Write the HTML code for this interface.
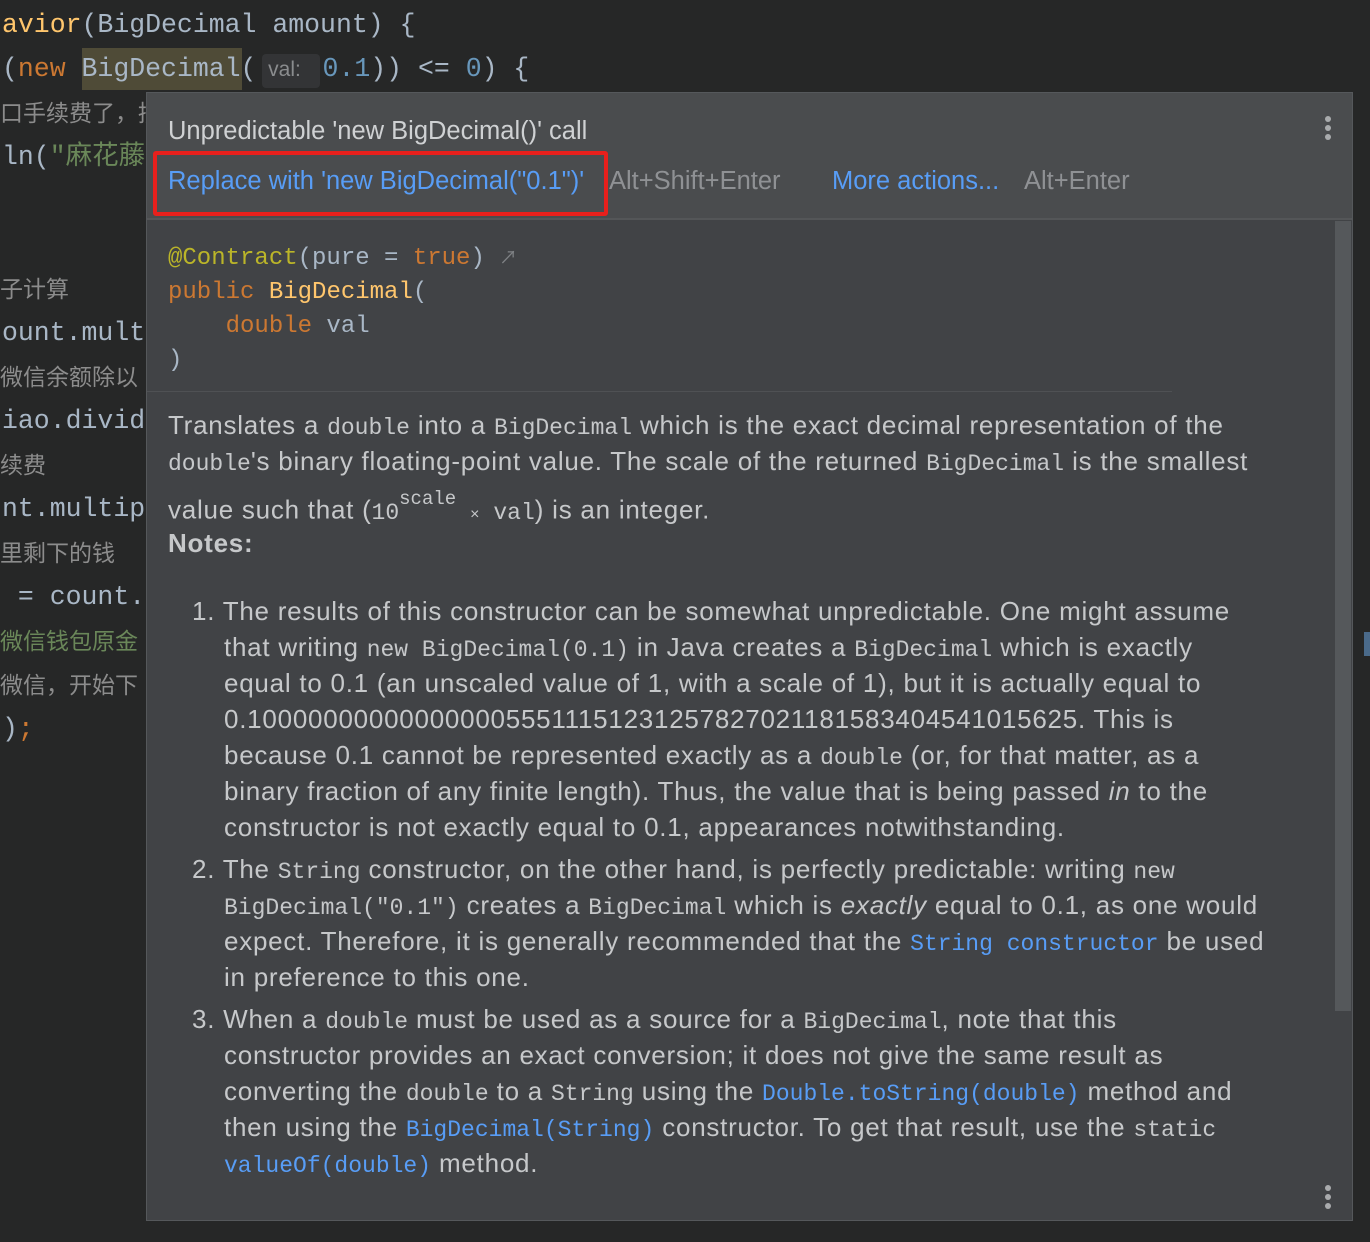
<!DOCTYPE html>
<html><head><meta charset="utf-8"><style>
*{margin:0;padding:0;box-sizing:border-box}
html,body{width:1370px;height:1242px;overflow:hidden;background:#262727}
body{position:relative;font-family:"Liberation Sans","Noto Sans CJK SC",sans-serif;color:#c6c8ca}
.l{position:absolute;white-space:pre;line-height:36px;height:36px}
.m{font-family:"Liberation Mono","Noto Sans CJK SC",monospace}
.ed{font-size:24px;color:#a9b7c6}
.ed2{font-size:26.5px;color:#a9b7c6}
.cn{font-family:"Liberation Sans","Noto Sans CJK SC",sans-serif;font-size:23px;color:#8c8c8c}
.or{color:#cc7832}.yl{color:#ffc66d}.bl{color:#6897bb}.gr{color:#6a8759}
.pop{position:absolute;left:146px;top:92px;width:1207px;height:1129px;background:#414346;border:1px solid #55585b}
.hdr{position:absolute;left:0;top:0;width:100%;height:127px;background:#4a4c4e;border-bottom:2px solid #545658}
.t{font-size:26px;letter-spacing:0.75px}
.h{font-size:25.5px}
.mm{font-family:"Liberation Mono",monospace;font-size:23px;letter-spacing:0}
.lk{color:#589df6}
.dots{position:absolute;width:6px}
.dots i{display:block;width:6px;height:6px;border-radius:50%;background:#a9abad;margin-bottom:3px}
</style></head><body>
<div class="l m ed2" style="left:2px;top:7px"><span class="yl">avior</span>(BigDecimal amount) {</div>
<div style="position:absolute;left:82px;top:48px;width:160px;height:42px;background:#4f4b37"></div>
<div style="position:absolute;left:262px;top:54px;width:58px;height:34px;background:#333436;border-radius:4px"></div>
<div class="l m ed2" style="left:2px;top:51px">(<span class="or">new</span> BigDecimal(<span style="font-family:'Liberation Sans';font-size:21px;color:#8a8c8e">  val: </span><span class="bl"> 0.1</span>)) &lt;= <span class="bl">0</span>) {</div>
<div class="l cn" style="left:0;top:95px">口手续费了，拼</div>
<div class="l m ed2" style="left:2px;top:139px">ln(<span class="gr">"麻花藤</span></div>
<div class="l cn" style="left:0;top:271px">子计算</div>
<div class="l m ed2" style="left:2px;top:315px">ount.mult</div>
<div class="l cn" style="left:0;top:359px">微信余额除以</div>
<div class="l m ed2" style="left:2px;top:403px">iao.divid</div>
<div class="l cn" style="left:0;top:447px">续费</div>
<div class="l m ed2" style="left:2px;top:491px">nt.multip</div>
<div class="l cn" style="left:0;top:535px">里剩下的钱</div>
<div class="l m ed2" style="left:2px;top:579px"> = count.</div>
<div class="l cn" style="left:0;top:623px;color:#6a8759">微信钱包原金</div>
<div class="l cn" style="left:0;top:667px">微信，开始下</div>
<div class="l m ed2" style="left:2px;top:711px">)<span class="or">;</span></div>
<div style="position:absolute;left:1364px;top:632px;width:6px;height:24px;background:#4a6a8a"></div>

<div class="pop">
 <div class="hdr"></div>
 <div class="dots" style="left:1178px;top:23px"><i></i><i></i><i></i></div>
 <div style="position:absolute;left:1188px;top:128px;width:16px;height:790px;background:#55585b"></div>
 <div style="position:absolute;left:0;top:298px;width:1025px;height:1px;background:#4f5154"></div>
 <div class="dots" style="left:1178px;top:1092px"><i></i><i></i><i></i></div>
</div>
<div style="position:absolute;left:153px;top:151px;width:455px;height:65px;border:4px solid #e8201c;border-radius:3px"></div>

<div class="l h" style="left:168px;top:113px;color:#cfd1d3">Unpredictable 'new BigDecimal()' call</div>
<div class="l h" style="left:168px;top:163px;color:#589df6">Replace with 'new BigDecimal("0.1")'</div>
<div class="l h" style="left:609px;top:163px;color:#8f9194">Alt+Shift+Enter</div>
<div class="l h" style="left:832px;top:163px;color:#589df6">More actions...</div>
<div class="l h" style="left:1024px;top:163px;color:#8f9194">Alt+Enter</div>

<div class="l m ed" style="left:168px;top:241px"><span style="color:#bbb529">@Contract</span>(pure = <span class="or">true</span>) <span style="color:#7f8285;font-size:18px">↗</span></div>
<div class="l m ed" style="left:168px;top:275px"><span class="or">public</span> <span class="yl">BigDecimal</span>(</div>
<div class="l m ed" style="left:168px;top:309px">    <span class="or">double</span> val</div>
<div class="l m ed" style="left:168px;top:343px">)</div>

<div class="l t" style="left:168px;top:407px">Translates a <span class="mm">double</span> into a <span class="mm">BigDecimal</span> which is the exact decimal representation of the</div>
<div class="l t" style="left:168px;top:443px"><span class="mm">double</span>'s binary floating-point value. The scale of the returned <span class="mm">BigDecimal</span> is the smallest</div>
<div class="l t" style="left:168px;top:487px">value such that (<span class="mm">10<sup style="font-size:19px;position:relative;top:-6px">scale</sup> <span style="font-size:16px">×</span> val</span>) is an integer.</div>
<div class="l t" style="left:168px;top:525px;font-weight:bold">Notes:</div>

<div class="l t" style="left:192px;top:593px">1. The results of this constructor can be somewhat unpredictable. One might assume</div>
<div class="l t" style="left:224px;top:629px">that writing <span class="mm">new BigDecimal(0.1)</span> in Java creates a <span class="mm">BigDecimal</span> which is exactly</div>
<div class="l t" style="left:224px;top:665px">equal to 0.1 (an unscaled value of 1, with a scale of 1), but it is actually equal to</div>
<div class="l t" style="left:224px;top:701px">0.1000000000000000055511151231257827021181583404541015625. This is</div>
<div class="l t" style="left:224px;top:737px">because 0.1 cannot be represented exactly as a <span class="mm">double</span> (or, for that matter, as a</div>
<div class="l t" style="left:224px;top:773px">binary fraction of any finite length). Thus, the value that is being passed <i>in</i> to the</div>
<div class="l t" style="left:224px;top:809px">constructor is not exactly equal to 0.1, appearances notwithstanding.</div>
<div class="l t" style="left:192px;top:851px">2. The <span class="mm">String</span> constructor, on the other hand, is perfectly predictable: writing <span class="mm">new</span></div>
<div class="l t" style="left:224px;top:887px"><span class="mm">BigDecimal("0.1")</span> creates a <span class="mm">BigDecimal</span> which is <i>exactly</i> equal to 0.1, as one would</div>
<div class="l t" style="left:224px;top:923px">expect. Therefore, it is generally recommended that the <span class="mm lk">String constructor</span> be used</div>
<div class="l t" style="left:224px;top:959px">in preference to this one.</div>
<div class="l t" style="left:192px;top:1001px">3. When a <span class="mm">double</span> must be used as a source for a <span class="mm">BigDecimal</span>, note that this</div>
<div class="l t" style="left:224px;top:1037px">constructor provides an exact conversion; it does not give the same result as</div>
<div class="l t" style="left:224px;top:1073px">converting the <span class="mm">double</span> to a <span class="mm">String</span> using the <span class="mm lk">Double.toString(double)</span> method and</div>
<div class="l t" style="left:224px;top:1109px">then using the <span class="mm lk">BigDecimal(String)</span> constructor. To get that result, use the <span class="mm">static</span></div>
<div class="l t" style="left:224px;top:1145px"><span class="mm lk">valueOf(double)</span> method.</div>
</body></html>
